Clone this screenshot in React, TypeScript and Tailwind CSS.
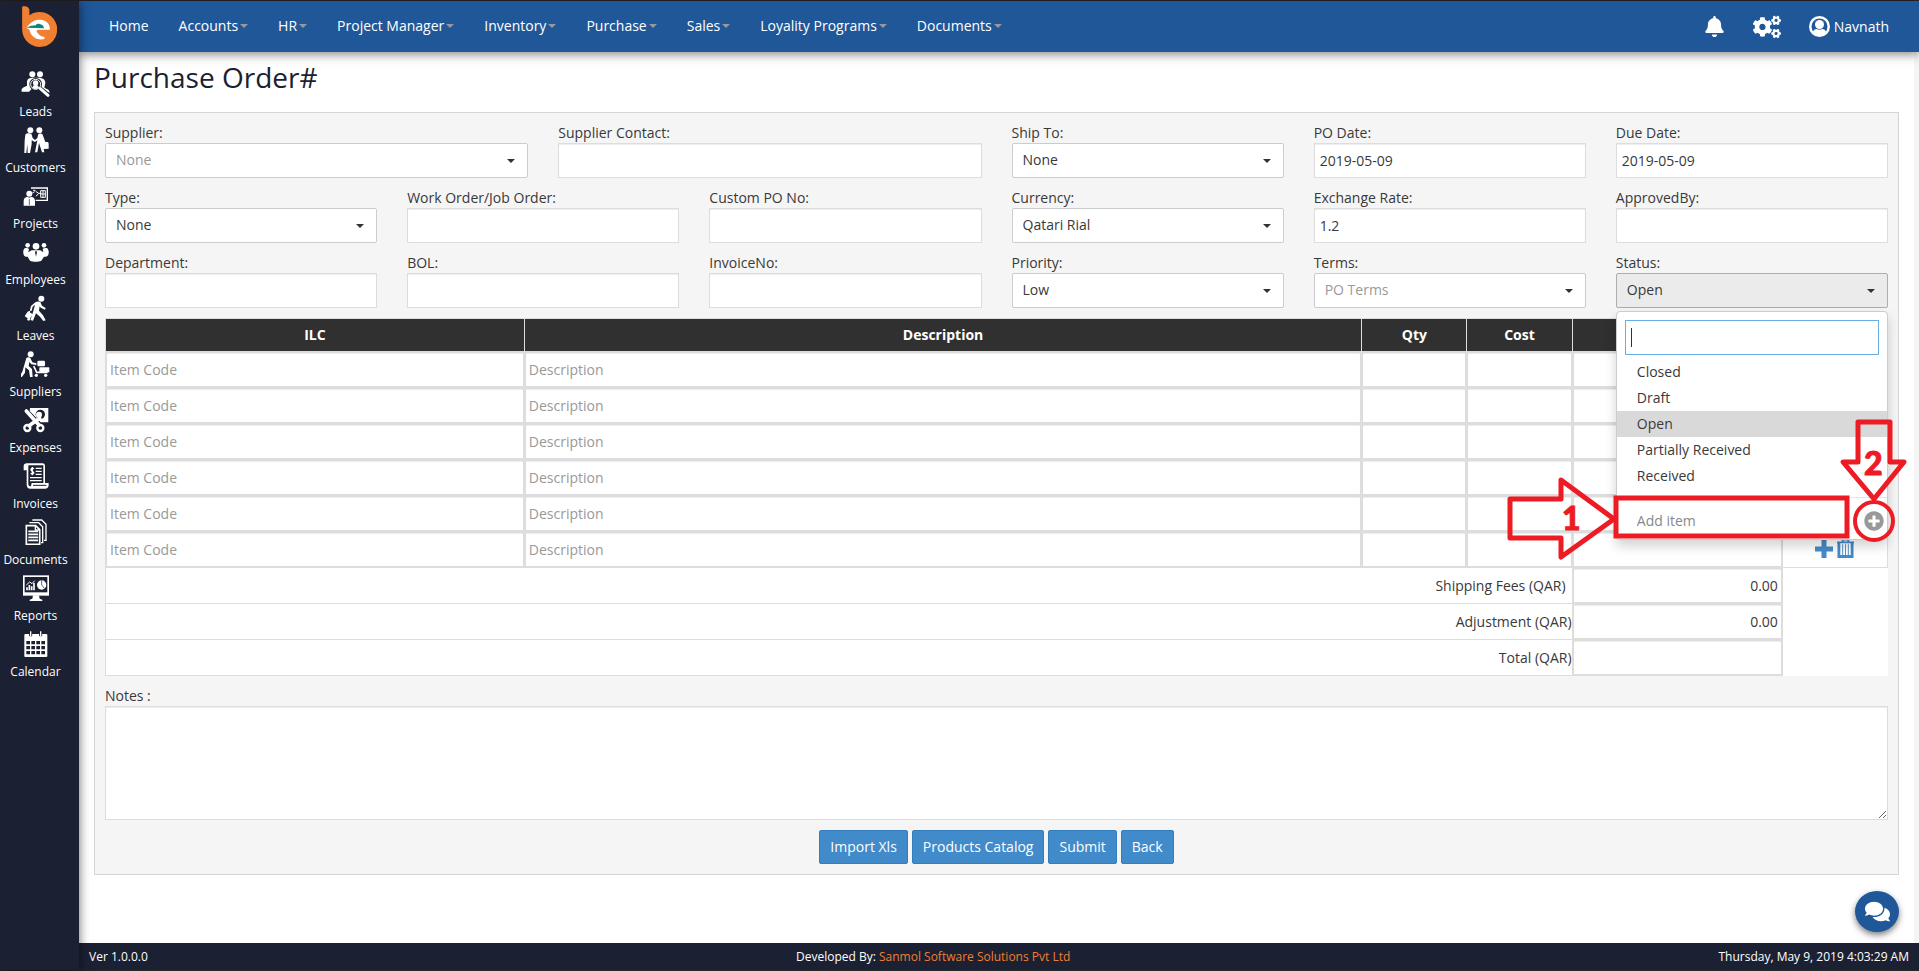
import { useState } from "react";
import type { ReactNode } from "react";
import { FaBell, FaCogs, FaComments, FaPlusCircle } from "react-icons/fa";

const menuItems = [
  { label: "Home", hasMenu: false },
  { label: "Accounts", hasMenu: true },
  { label: "HR", hasMenu: true },
  { label: "Project Manager", hasMenu: true },
  { label: "Inventory", hasMenu: true },
  { label: "Purchase", hasMenu: true },
  { label: "Sales", hasMenu: true },
  { label: "Loyality Programs", hasMenu: true },
  { label: "Documents", hasMenu: true },
];

// Sidebar icons, all drawn on a 90x78 grid
const sideItems: { label: string; icon: ReactNode }[] = [
  {
    label: "Leads",
    icon: (
      <>
        <circle cx="36" cy="10" r="9" />
        <circle cx="59" cy="10" r="9" />
        <path d="M20 34a12 12 0 0 1 8-12l8-2h24l8 3c5 3 7 8 7 13l-3 14 12 6c3 3 4 7 4 9l-12-2-12-9H34l-8 8H4c-2-7 2-12 8-14l8-4z" />
        <circle cx="46" cy="40" r="19" fill="#1b2132" />
        <circle cx="46" cy="40" r="15" fill="none" stroke="#fff" strokeWidth="3" />
        <circle cx="46" cy="36" r="8" />
        <path d="M36 51c1-7 5-9 10-9s9 2 10 9c-6 4-14 4-20 0z" />
        <path d="M58 52l27 22" stroke="#1b2132" strokeWidth="14" />
        <path d="M60 53l23 20" stroke="#fff" strokeWidth="9" strokeLinecap="round" />
      </>
    ),
  },
  {
    label: "Customers",
    icon: (
      <>
        <circle cx="30" cy="10" r="9" />
        <circle cx="57" cy="10" r="9" />
        <path d="M15 23c2-3 6-4 10-4l8 1 4 13 7 6 7-6 3-12c5-3 11-2 13 2l8 22h5c3 0 5 2 5 5v15l-15 1 2 10h-7l-9-28-5 28h-7l7-36-7 5-10-5v11l-5 27h-7l-1-26-3 26h-6l1-38z" />
      </>
    ),
  },
  {
    label: "Projects",
    icon: (
      <>
        <path d="M32 15h49v37H46" fill="none" stroke="#fff" strokeWidth="4" />
        <path d="M38 22l7 0M36 30l7-4M46 25l9 6-8 9M55 31h8M61 23h14M61 43h14M61 23v20M61 33h14M68 23v20M75 23v20" fill="none" stroke="#fff" strokeWidth="3" />
        <circle cx="27" cy="32" r="9" />
        <path d="M10 68V53c0-7 5-11 11-12l6 3 6-3c6 1 11 5 11 12v15z" />
        <path d="M27 48v18" stroke="#1b2132" strokeWidth="2" />
      </>
    ),
  },
  {
    label: "Employees",
    icon: (
      <>
        <circle cx="22" cy="19" r="7" />
        <circle cx="47" cy="22" r="10" />
        <circle cx="71" cy="19" r="7" />
        <path d="M13 28c5-2 10-1 13 2l-2 10 10-6h26l9 6-2-10c3-3 9-4 14-2 5 6 5 13 3 19-2 5-7 6-13 6l-8 12c-9 4-25 4-34 0l-7-12c-6 1-10-1-12-6-2-7-2-14 3-19z" />
        <path d="M47 35l-3 4 3 14 3-14z" fill="#1b2132" />
      </>
    ),
  },
  {
    label: "Leaves",
    icon: (
      <>
        <circle cx="63" cy="11" r="9" />
        <path d="M45 22c4-3 10-4 15-1l5 11 11 7-2 5-13-6-3-4-2 13 12 14 8 15-7 2-10-13-12-10-9 22-8-2 9-27 5-19-7 6-3 12-5-2 3-12z" />
        <path d="M34 44L19 57" stroke="#fff" strokeWidth="3" />
        <rect x="17" y="51" width="17" height="19" rx="2" transform="rotate(35 25 60)" />
        <circle cx="25" cy="73" r="4" />
      </>
    ),
  },
  {
    label: "Suppliers",
    icon: (
      <>
        <circle cx="31" cy="10" r="9" />
        <path d="M18 21c4-3 9-2 12 0l6 13 12 3v5l-15-2-6-7-2 12 10 9 2 24h-8l-3-20-11-9-1 16-10 14-6-5 8-12z" />
        <rect x="51" y="29" width="23" height="17" rx="4" />
        <rect x="57" y="49" width="30" height="15" rx="2" />
        <path d="M40 45l9 19h33" fill="none" stroke="#fff" strokeWidth="5" />
        <circle cx="48" cy="73" r="5" />
        <circle cx="76" cy="73" r="5" />
      </>
    ),
  },
  {
    label: "Expenses",
    icon: (
      <>
        <path d="M29 3h55v43H60L28 13z" />
        <circle cx="60" cy="22" r="14" fill="#1b2132" />
        <circle cx="56" cy="23" r="9" />
        <path d="M16 12l40 42" stroke="#1b2132" strokeWidth="17" />
        <path d="M18 12l38 42M58 34L26 56" stroke="#fff" strokeWidth="11" strokeLinecap="round" />
        <circle cx="21" cy="63" r="9" fill="none" stroke="#fff" strokeWidth="7" />
        <circle cx="60" cy="63" r="9" fill="none" stroke="#fff" strokeWidth="7" />
      </>
    ),
  },
  {
    label: "Invoices",
    icon: (
      <>
        <path d="M10 22V9c0-5 4-8 9-8h47c6 0 8 4 8 9v50h11c1 11-2 17-10 17H30c-7 0-11-5-11-12V22z" />
        <path d="M24 7h45v53H34l-2 9c-4 2-7 0-8-5z" fill="#1b2132" />
        <path d="M38 67h40" stroke="#1b2132" strokeWidth="3" />
        <path d="M46 16h18M46 25h18M46 34h18M29 44h35M29 53h35" stroke="#fff" strokeWidth="4" />
        <path d="M41 17c-8-4-13 4-5 8s4 11-5 6M36 12v25" fill="none" stroke="#fff" strokeWidth="4" />
      </>
    ),
  },
  {
    label: "Documents",
    icon: (
      <>
        <path d="M36 3h28l13 13v48h-6" fill="none" stroke="#fff" strokeWidth="4" />
        <path d="M27 11h28l12 12v48h-5" fill="none" stroke="#fff" strokeWidth="4" />
        <path d="M18 20h28l12 12v44H18z" fill="none" stroke="#fff" strokeWidth="5" />
        <path d="M45 20v13h13" fill="none" stroke="#fff" strokeWidth="4" />
        <path d="M24 37h29M24 46h29M24 55h29M24 64h29" stroke="#fff" strokeWidth="5" />
      </>
    ),
  },
  {
    label: "Reports",
    icon: (
      <>
        <path d="M8 1h78v61H8z" />
        <path d="M13 6h68v46H13z" fill="#1b2132" />
        <path d="M38 61h18l2 10 8 3v4H28v-4l8-3z" />
        <path d="M20 46V37M27 46V30M34 46V34M41 46V24" stroke="#fff" strokeWidth="5" />
        <path d="M18 30l10-9 7 5 8-9" fill="none" stroke="#fff" strokeWidth="3" />
        <circle cx="64" cy="30" r="14" />
        <path d="M64 30V15M64 30l9 11" stroke="#1b2132" strokeWidth="2" />
      </>
    ),
  },
  {
    label: "Calendar",
    icon: (
      <>
        <rect x="12" y="9" width="69" height="69" rx="3" />
        <path d="M31 1v15M61 1v15" stroke="#1b2132" strokeWidth="9" />
        <path d="M31 1v15M61 1v15" stroke="#fff" strokeWidth="4" />
        <path d="M18 35h57M18 50h57M18 65h57" stroke="#1b2132" strokeWidth="10" strokeDasharray="11 4" />
      </>
    ),
  },
];

const lineItems = [1, 2, 3, 4, 5, 6];
const statuses = ["Closed", "Draft", "Open", "Partially Received", "Received"];

const cellInput =
  "block h-[35px] w-full border border-[#dddddd] bg-white px-[3px] shadow-[inset_0_1px_1px_rgba(0,0,0,0.075)] placeholder:text-[#999999] focus:outline-none";

function Logo() {
  return (
    <svg viewBox="66 17 105 124" className="h-[41px] w-[35px]" aria-label="be">
      <path
        d="M66 19c10-3 22 1 22 12v14a53 53 0 1 1-22 43z"
        fill="#f07f31"
      />
      <path
        d="M79 83C92 62 110 56 126 59c16 3 25 15 24 30h-35c-6 0-7 4-3 9 5 7 12 12 22 13l-1 6c-22 5-41-7-45-28z"
        fill="#fff"
      />
      <path d="M79 83c9-6 18-8 28-8 4-5 11-5 16-2 6 2 9 6 9 11z" fill="#0b8587" />
    </svg>
  );
}

function UserCircle() {
  return (
    <svg viewBox="0 0 42 42" className="size-[21px]" fill="currentColor">
      <circle cx="21" cy="21" r="18.5" fill="none" stroke="currentColor" strokeWidth="5" />
      <circle cx="21" cy="17" r="9" />
      <path d="M7 33c2-5 5-7 8-7 4 2 8 2 12 0 3 0 6 2 8 7-7 8-21 8-28 0z" />
    </svg>
  );
}

function Plus() {
  return (
    <svg viewBox="0 0 18 18" className="size-[18px]" fill="none" stroke="currentColor" strokeWidth="5">
      <path d="M9 0v18M0 9h18" />
    </svg>
  );
}

function Trash() {
  return (
    <svg viewBox="0 0 18 21" className="h-[21px] w-[17px]" fill="none" stroke="currentColor">
      <path d="M6 3V1h6v2M0 4h18" strokeWidth="2" />
      <path d="M2 4v15h14V4" strokeWidth="3" />
      <path d="M6 6v12M9 6v12M12 6v12" strokeWidth="1" />
    </svg>
  );
}

function TextField({ id, label, span, value }: { id: string; label: string; span: string; value?: string }) {
  return (
    <div className={span}>
      <label htmlFor={id} className="block">
        {label}
      </label>
      <input
        id={id}
        type="text"
        defaultValue={value}
        className="block h-[35px] w-full border border-[#dddddd] bg-white px-[5px] shadow-[inset_0_1px_1px_rgba(0,0,0,0.075)] focus:outline-none"
      />
    </div>
  );
}

function SelectField({
  id,
  label,
  span,
  value,
  muted,
  open,
  children,
}: {
  id: string;
  label: string;
  span: string;
  value: string;
  muted?: boolean;
  open?: boolean;
  children?: ReactNode;
}) {
  return (
    <div className={span}>
      <label htmlFor={id} className="block">
        {label}
      </label>
      <div className="relative">
        <select
          id={id}
          defaultValue={value}
          className={`block h-[35px] w-full appearance-none rounded-xs border px-[10px] pb-[2px] focus:outline-none ${
            open ? "border-[#adadad] bg-[#ebebeb]" : "border-[#cccccc] bg-white"
          } ${muted ? "text-[#999999]" : ""}`}
        >
          <option>{value}</option>
        </select>
        <span className="pointer-events-none absolute top-4 right-[13px] border-x-4 border-t-4 border-x-transparent border-t-[#333333]" />
        {children}
      </div>
    </div>
  );
}

// Numbered arrows that point at the new-item box and its plus button
function Callouts() {
  return (
    <svg
      viewBox="1500 410 412 156"
      className="pointer-events-none absolute top-[137px] -right-[24px] z-20 h-[156px] w-[412px]"
      fill="none"
      stroke="#ed1c24"
      strokeWidth="5"
    >
      <path d="M1510 499h51v-19l53 39-53 38v-19h-51z" strokeLinejoin="round" />
      <rect x="1616" y="498" width="231" height="38" />
      <path d="M1858 422h32v40h14l-30 37-31-37h15z" strokeLinejoin="round" />
      <circle cx="1874" cy="521" r="19" strokeWidth="4" />
      <g fill="#ed1c24" strokeWidth="1" className="font-['Lato',sans-serif] text-[32px] font-black">
        <text x="1562" y="530">1</text>
        <text x="1864" y="475">2</text>
      </g>
    </svg>
  );
}

function StatusMenu() {
  const [selected, setSelected] = useState("Open");

  return (
    <div className="absolute inset-x-0 top-[38px] z-10 rounded border border-[#cccccc] bg-white shadow-[0_6px_12px_rgba(0,0,0,0.175)]">
      <div className="relative px-2 pt-2 pb-1">
        <input
          type="text"
          aria-label="Search status"
          className="block h-[35px] w-full border border-[#66afe9] px-[5px] focus:outline-none"
        />
        <span className="absolute top-4 left-[14px] h-[19px] w-px bg-[#333333]" />
      </div>
      <ul>
        {statuses.map((status) => (
          <li key={status}>
            <button
              type="button"
              onClick={() => setSelected(status)}
              className={`block h-[26px] w-full px-5 text-left ${
                status === selected ? "bg-[#d9d9d9]" : ""
              }`}
            >
              {status}
            </button>
          </li>
        ))}
      </ul>
      <div className="mt-2 flex h-[42px] items-center justify-between border-t border-[#e5e5e5] pt-1 pr-[3px] pl-5">
        <input
          type="text"
          aria-label="New status"
          placeholder="Add item"
          className="w-[180px] placeholder:text-[#888888] focus:outline-none"
        />
        <button type="button" aria-label="Add" className="text-[#999999]">
          <FaPlusCircle className="size-[20px]" />
        </button>
      </div>
    </div>
  );
}

export default function App() {
  return (
    <div className="flex min-h-screen border-y border-y-[#262626] bg-[#f5f5f5] font-['Open_Sans',sans-serif] text-sm leading-5 text-[#393939]">
      {/* Sidebar */}
      <aside className="z-20 w-[79px] shrink-0 bg-[#1b2132] pr-2 text-white shadow-[0_0_10px_rgba(0,0,0,0.6)]">
        <a href="#home" className="flex h-[70px] justify-center pt-[5px] pl-2">
          <Logo />
        </a>
        <nav>
          {sideItems.map((item) => (
            <a
              key={item.label}
              href={`#${item.label.toLowerCase()}`}
              className="flex h-14 flex-col items-center text-xs"
            >
              <svg viewBox="2 0 90 78" fill="#fff" className="h-[26px] w-[30px]">
                {item.icon}
              </svg>
              <span className="mt-[5px] leading-5">{item.label}</span>
            </a>
          ))}
        </nav>
      </aside>

      <div className="flex min-w-0 flex-1 flex-col">
        {/* Top bar */}
        <header className="z-10 flex h-[51px] items-center justify-between bg-[#1f5799] pr-[30px] pl-[15px] text-white shadow-[0_2px_10px_rgba(0,0,0,0.5)]">
          <nav className="flex pb-[2px]">
            {menuItems.map((item) => (
              <a
                key={item.label}
                href={`#${item.label.toLowerCase()}`}
                className="flex items-center px-[15px]"
              >
                {item.label}
                {item.hasMenu && (
                  <span className="ml-[2px] border-x-4 border-t-4 border-x-transparent border-t-[#999999]" />
                )}
              </a>
            ))}
          </nav>
          <div className="flex items-center">
            <button type="button" aria-label="Notifications" className="mr-7">
              <FaBell className="size-[21px]" />
            </button>
            <button type="button" aria-label="Settings" className="mr-7">
              <FaCogs className="size-[28px]" />
            </button>
            <a href="#profile" className="flex items-center gap-1">
              <UserCircle />
              Navnath
            </a>
          </div>
        </header>

        <main className="mr-[5px] flex-1 bg-white px-[15px] pb-5">
          <h1 className="mb-[10px] text-[28px] leading-[50px] font-medium text-[#1b2132]">
            Purchase Order#
          </h1>

          <form className="border border-[#d5d5d5] bg-[#f5f5f5] p-[10px]">
            <div className="grid grid-cols-12 gap-x-[30px] gap-y-[10px]">
              <SelectField id="supplier" label="Supplier:" span="col-span-3" value="None" muted />
              <TextField id="contact" label="Supplier Contact:" span="col-span-3" />
              <SelectField id="shipTo" label="Ship To:" span="col-span-2" value="None" />
              <TextField id="poDate" label="PO Date:" span="col-span-2" value="2019-05-09" />
              <TextField id="dueDate" label="Due Date:" span="col-span-2" value="2019-05-09" />

              <SelectField id="type" label="Type:" span="col-span-2" value="None" />
              <TextField id="workOrder" label="Work Order/Job Order:" span="col-span-2" />
              <TextField id="customPo" label="Custom PO No:" span="col-span-2" />
              <SelectField id="currency" label="Currency:" span="col-span-2" value="Qatari Rial" />
              <TextField id="rate" label="Exchange Rate:" span="col-span-2" value="1.2" />
              <TextField id="approvedBy" label="ApprovedBy:" span="col-span-2" />

              <TextField id="department" label="Department:" span="col-span-2" />
              <TextField id="bol" label="BOL:" span="col-span-2" />
              <TextField id="invoiceNo" label="InvoiceNo:" span="col-span-2" />
              <SelectField id="priority" label="Priority:" span="col-span-2" value="Low" />
              <SelectField id="terms" label="Terms:" span="col-span-2" value="PO Terms" muted />
              <SelectField id="status" label="Status:" span="col-span-2" value="Open" open>
                <StatusMenu />
                <Callouts />
              </SelectField>
            </div>

            {/* Line items */}
            <table className="mt-[10px] w-full table-fixed border-collapse bg-white">
              <colgroup>
                <col className="w-[23.5%]" />
                <col className="w-[47%]" />
                <col className="w-[5.9%]" />
                <col className="w-[5.9%]" />
                <col className="w-[11.8%]" />
                <col className="w-[5.9%]" />
              </colgroup>
              <thead>
                <tr className="h-[33px] bg-[#303030] text-white">
                  {["ILC", "Description", "Qty", "Cost", "Total", ""].map((head) => (
                    <th key={head} className="border border-[#dddddd] font-bold">
                      {head}
                    </th>
                  ))}
                </tr>
              </thead>
              <tbody>
                {lineItems.map((row) => (
                  <tr key={row}>
                    <td className="border border-[#dddddd] p-0">
                      <input type="text" aria-label={`Item code ${row}`} placeholder="Item Code" className={cellInput} />
                    </td>
                    <td className="border border-[#dddddd] p-0">
                      <input type="text" aria-label={`Description ${row}`} placeholder="Description" className={cellInput} />
                    </td>
                    <td className="border border-[#dddddd] p-0">
                      <input type="text" aria-label={`Quantity ${row}`} className={cellInput} />
                    </td>
                    <td className="border border-[#dddddd] p-0">
                      <input type="text" aria-label={`Cost ${row}`} className={cellInput} />
                    </td>
                    <td className="border border-[#dddddd] p-0">
                      <input type="text" aria-label={`Total ${row}`} className={cellInput} />
                    </td>
                    <td className="border border-[#dddddd] p-0">
                      <div className="flex items-center justify-center gap-1 pb-[2px] text-[#428bca]">
                        <button type="button" aria-label="Add row">
                          <Plus />
                        </button>
                        <button type="button" aria-label="Delete row">
                          <Trash />
                        </button>
                      </div>
                    </td>
                  </tr>
                ))}
                <tr>
                  <td colSpan={4} className="border border-[#dddddd] py-0 pr-[6px] text-right">
                    <label htmlFor="shipping">Shipping Fees (QAR)</label>
                  </td>
                  <td className="border border-[#dddddd] p-0">
                    <input id="shipping" type="text" defaultValue="0.00" className={`${cellInput} text-right`} />
                  </td>
                  <td rowSpan={3} />
                </tr>
                <tr>
                  <td colSpan={4} className="border border-[#dddddd] p-0 text-right">
                    <label htmlFor="adjustment">Adjustment (QAR)</label>
                  </td>
                  <td className="border border-[#dddddd] p-0">
                    <input id="adjustment" type="text" defaultValue="0.00" className={`${cellInput} text-right`} />
                  </td>
                </tr>
                <tr>
                  <td colSpan={4} className="border border-[#dddddd] p-0 text-right">
                    <label htmlFor="total">Total (QAR)</label>
                  </td>
                  <td className="border border-[#dddddd] p-0">
                    <input id="total" type="text" className={`${cellInput} text-right`} />
                  </td>
                </tr>
              </tbody>
            </table>

            <label htmlFor="notes" className="mt-[10px] block">
              Notes :
            </label>
            <textarea
              id="notes"
              className="block h-[114px] w-full border border-[#dddddd] bg-white p-[5px] shadow-[inset_0_1px_1px_rgba(0,0,0,0.075)] focus:outline-none"
            />

            <div className="mt-[10px] flex justify-center gap-1">
              {["Import Xls", "Products Catalog", "Submit", "Back"].map((action) => (
                <button
                  key={action}
                  type="button"
                  className="h-[34px] rounded-xs border border-[#357ebd] bg-[#428bca] px-[10px] text-white hover:bg-[#3276b1]"
                >
                  {action}
                </button>
              ))}
            </div>
          </form>
        </main>

        {/* Footer */}
        <footer className="flex h-[27px] items-center justify-between bg-[#1b2132] px-[10px] text-xs text-white">
          <span>Ver 1.0.0.0</span>
          <span>
            Developed By:{" "}
            <a href="#sanmol" className="text-[#f07f31]">
              Sanmol Software Solutions Pvt Ltd
            </a>
          </span>
          <span>Thursday, May 9, 2019 4:03:29 AM</span>
        </footer>
      </div>

      <button
        type="button"
        aria-label="Chat"
        className="fixed right-5 bottom-[39px] z-30 flex h-[41px] w-[44px] items-center justify-center rounded-[50%] bg-[#1f5799] text-white shadow-[0_3px_6px_rgba(0,0,0,0.5)]"
      >
        <FaComments className="size-[25px]" />
      </button>
    </div>
  );
}
